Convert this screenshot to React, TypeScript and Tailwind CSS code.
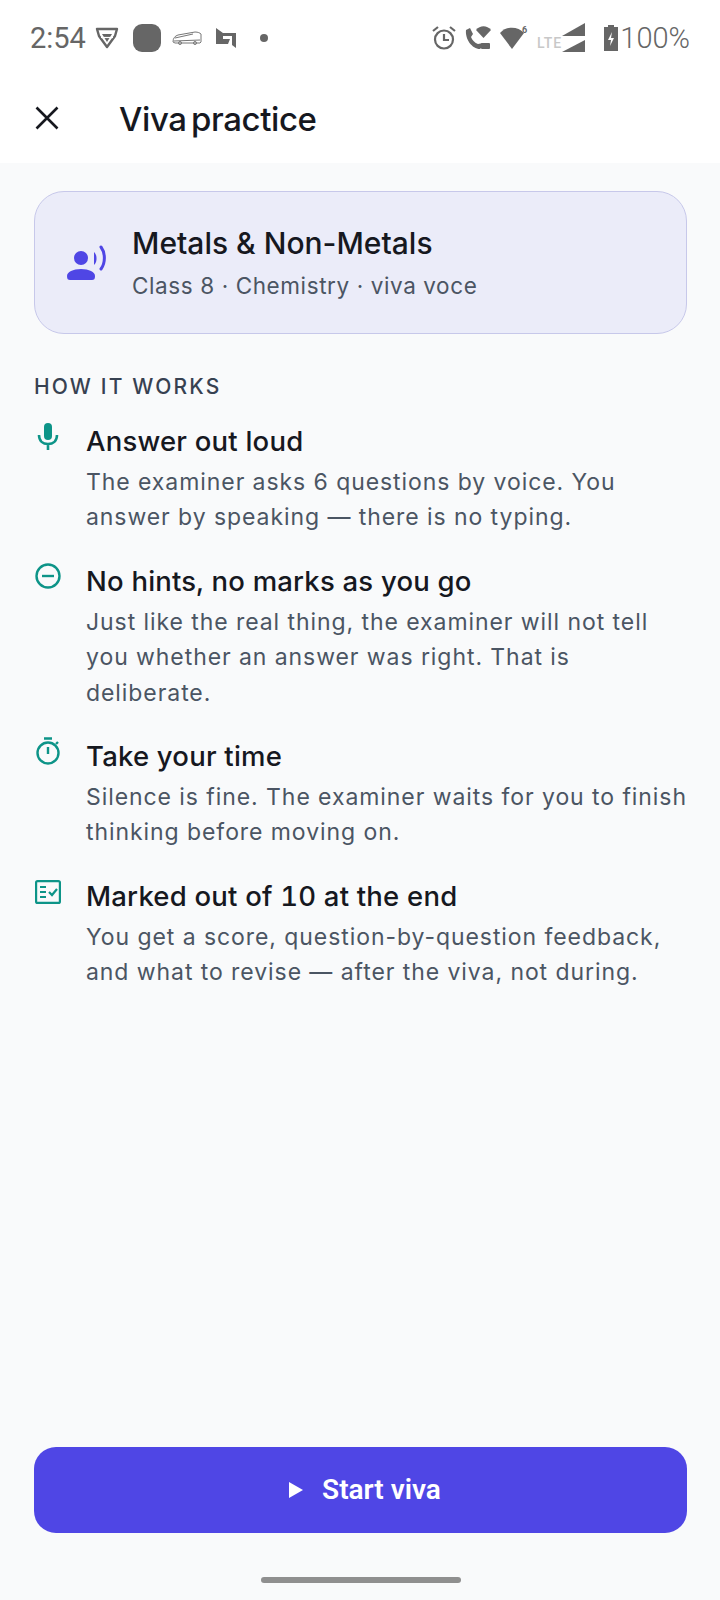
import React from "react";

const Item = ({ icon, title, lines }: { icon: React.ReactNode; title: string; lines: string[] }) => (
  <div className="flex">
    <div className="w-[52px] shrink-0 pl-[1px]">{icon}</div>
    <div>
      <div className="text-[27.5px] leading-[36px] font-medium tracking-[0.2px] tabular-nums text-[#16181f]">{title}</div>
      <div className="mt-[6px] text-[23px] leading-[35.4px] tracking-[0.93px] text-[#4b5563]">
        {lines.map((l) => (
          <div key={l} className="whitespace-nowrap">{l}</div>
        ))}
      </div>
    </div>
  </div>
);

const teal = "#0d9488";

export default function App() {
  return (
    <div className="w-[720px] h-[1600px] flex flex-col bg-[#f9fafb] font-['Inter',sans-serif]">
      <div className="bg-white h-[163px] shrink-0">
        <div className="h-[76px] flex items-center pl-[30px] text-[#666666]">
          <span className="text-[29px] font-['Roboto',sans-serif] font-normal leading-none">2:54</span>
          <svg width="26" height="24" viewBox="0 0 26 24" className="ml-[8px]" fill="none">
            <path d="M3 3h20l-2 7-8 11-8-11z" stroke="#666" strokeWidth="2.4" strokeLinejoin="round" />
            <path d="M8 8h10l-5 8z" fill="#666" />
            <path d="M7 11.500h12" stroke="#fff" strokeWidth="1.2" />
          </svg>
          <div className="ml-[13px] w-[28px] h-[28px] rounded-[9px] bg-[#666666]" />
          <svg width="30" height="16" viewBox="0 0 30 16" className="ml-[11px]" fill="none" stroke="#777" strokeWidth="1">
            <path d="M1 12c0-4 2-6 5-7l17-3c3 0 5 1 6 2v8l-1 1H3z" />
            <path d="M3 8l18-4M2 11l26-1" />
            <circle cx="8" cy="13" r="1.5" />
            <circle cx="23" cy="13" r="1.5" />
          </svg>
          <svg width="21" height="21" viewBox="0 0 21 21" className="ml-[14px]">
            <path d="M0 0l7 5h13v15l-4-3V8H7v3h7l-2 5H0z" fill="#666" />
          </svg>
          <div className="ml-[23px] w-[8px] h-[8px] rounded-full bg-[#666666]" />
          <div className="ml-auto flex items-center pr-[30px]">
            <svg width="26" height="26" viewBox="0 0 26 26" fill="none" stroke="#666" strokeWidth="2.2">
              <circle cx="13" cy="14.500" r="9" />
              <path d="M13 9v6h5M2 6l5-4M24 6l-5-4" />
            </svg>
            <svg width="28" height="26" viewBox="0 0 28 26" className="ml-[7px]" fill="#666">
              <path d="M2 5l4-2 3 6-2 3c1 3 4 6 7 7l5-1v3l-3 3C8 24 1 14 2 5z" />
              <path d="M12 5c4-5 11-5 15 0l-7.500 8z" />
              <rect x="17" y="18" width="9" height="6" rx="1" />
            </svg>
            <svg width="29" height="26" viewBox="0 0 29 26" className="ml-[7px]" fill="#666">
              <path d="M1 8c6-7 18-7 24 0L13 24z" />
              <text x="23" y="8" fontSize="9" fontFamily="Roboto" fontWeight="700">6</text>
            </svg>
            <span className="ml-[9px] mt-[10px] text-[14px] leading-none font-medium text-[#c8c8c8] font-['Roboto',sans-serif] tracking-[1px]">LTE</span>
            <div className="flex flex-col gap-[1px]">
              <svg width="24" height="15" viewBox="0 0 24 15" fill="#666"><path d="M0 13L23 0v13z" /></svg>
              <svg width="24" height="14" viewBox="0 0 24 14" fill="#666"><path d="M0 13L23 1v12z" /></svg>
            </div>
            <svg width="16" height="26" viewBox="0 0 16 26" className="ml-[17px]">
              <path d="M5 0h6v2h4v24H1V2h4z" fill="#666" />
              <path d="M9 7l-4 8h3l-1 6 4-8H8z" fill="#fff" />
            </svg>
            <span className="text-[29px] font-['Roboto',sans-serif] font-light leading-none ml-[1px]">100%</span>
          </div>
        </div>
        <div className="h-[87px] flex items-center pb-[4px]">
          <svg width="24" height="24" viewBox="0 0 24 24" className="ml-[35px]" fill="none" stroke="#16181f" strokeWidth="2.6">
            <path d="M1.500 1.500l21 21M22.500 1.500l-21 21" />
          </svg>
          <span className="ml-[60px] mt-[4px] text-[33px] font-medium text-[#16181f] tracking-[-0.4px] [word-spacing:-4px] leading-none">Viva practice</span>
        </div>
      </div>

      <div className="flex-1 flex flex-col pl-[34px] pr-[33px] pt-[28px]">
        <div className="h-[143px] rounded-[30px] bg-[#ebecf9] border border-[#c7c8ea] flex items-center pl-[31px]">
          <svg width="42" height="36" viewBox="0 0 42 36" fill="#4f46e5" className="shrink-0">
            <circle cx="15" cy="13" r="7" />
            <path d="M1 31c0-4 6-7 14-7s14 3 14 7c0 3-1 4-3 4H4c-2 0-3-1-3-4z" />
            <path d="M28 7c2 2 2.500 4 2.500 6.500S30 18 28 20z" />
            <path d="M35 2c4.500 6 4.500 16 0 22" fill="none" stroke="#4f46e5" strokeWidth="3" strokeLinecap="round" />
          </svg>
          <div className="ml-[24px]">
            <div className="text-[30px] leading-[36px] font-medium text-[#16181f]">Metals &amp; Non-Metals</div>
            <div className="mt-[10px] text-[22.500px] leading-[30px] tracking-[0.6px] text-[#4b5563]">Class 8 · Chemistry · viva voce</div>
          </div>
        </div>

        <div className="mt-[41px] text-[21px] leading-[24px] font-medium tracking-[2.15px] text-[#374151]">HOW IT WORKS</div>

        <div className="mt-[24px] flex flex-col gap-[27px]">
          <Item
            icon={
              <svg width="26" height="28" viewBox="0 0 26 28" fill="none">
                <rect x="9" y="0" width="8" height="17" rx="4" fill={teal} />
                <path d="M4 12c0 6 4 9 9 9s9-3 9-9M13 21v6" stroke={teal} strokeWidth="2.600" />
              </svg>
            }
            title="Answer out loud"
            lines={["The examiner asks 6 questions by voice. You", "answer by speaking — there is no typing."]}
          />
          <Item
            icon={
              <svg width="26" height="26" viewBox="0 0 26 26" fill="none" stroke={teal} strokeWidth="2.400">
                <circle cx="13" cy="13" r="11.500" />
                <path d="M7 13h12" />
              </svg>
            }
            title="No hints, no marks as you go"
            lines={["Just like the real thing, the examiner will not tell", "you whether an answer was right. That is", "deliberate."]}
          />
          <Item
            icon={
              <svg width="26" height="28" viewBox="0 0 26 28" fill="none" stroke={teal} strokeWidth="2.400" className="-mt-[1px]">
                <circle cx="13" cy="16" r="10.500" />
                <path d="M9 1.500h8M13 10v7M21 7l2-2" />
              </svg>
            }
            title="Take your time"
            lines={["Silence is fine. The examiner waits for you to finish", "thinking before moving on."]}
          />
          <Item
            icon={
              <svg width="26" height="24" viewBox="0 0 26 24" fill="none" stroke={teal} strokeWidth="2.200" className="mt-[2px]">
                <rect x="1.100" y="1.100" width="23.800" height="21.800" rx="1.500" />
                <path d="M5 7h6M5 12h6M5 17h6M14 12l3 3 5-6" />
              </svg>
            }
            title="Marked out of 10 at the end"
            lines={["You get a score, question-by-question feedback,", "and what to revise — after the viva, not during."]}
          />
        </div>

        <div className="mt-auto mb-[44px] h-[86px] rounded-[22px] bg-[#4f46e5] flex items-center justify-center pl-[9px] text-white font-['Roboto',sans-serif] font-semibold text-[28px]">
          <svg width="15" height="16" viewBox="0 0 15 16" fill="#fff" className="mr-[18px]">
            <path d="M0 0l14 8-14 8z" />
          </svg>
          Start viva
        </div>
        <div className="mb-[17px] w-[200px] h-[6px] rounded-full bg-[#8f8f8f] mx-auto" />
      </div>
    </div>
  );
}
